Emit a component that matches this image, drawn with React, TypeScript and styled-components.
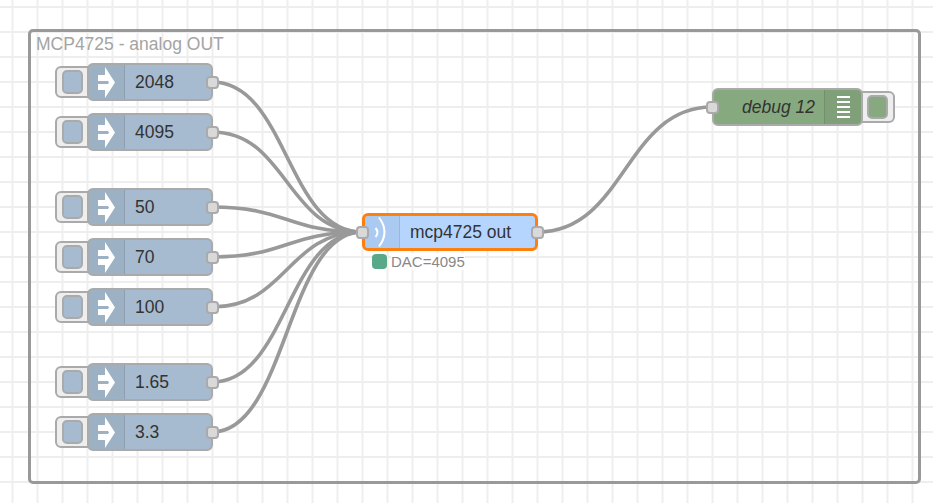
import React from "react";
import styled, { createGlobalStyle } from "styled-components";

const GlobalStyle = createGlobalStyle`
  html, body {
    margin: 0;
    padding: 0;
    background: #fff;
  }
  body {
    font-family: "Liberation Sans", Arial, sans-serif;
  }
`;

const Canvas = styled.div`
  position: relative;
  width: 933px;
  height: 503px;
  overflow: hidden;
  background-color: #fff;
  background-image:
    linear-gradient(to right, #eee 2px, transparent 2px),
    linear-gradient(to bottom, #eee 2px, transparent 2px);
  background-size: 25px 25px;
  background-position: 11.5px 6px;
`;

const GroupBox = styled.div`
  position: absolute;
  left: 28px;
  top: 29px;
  width: 893px;
  height: 455px;
  box-sizing: border-box;
  border: 3px solid #999;
  border-radius: 5px;
`;

const GroupLabel = styled.div`
  padding: 2px 0 0 5px;
  font-size: 17.5px;
  line-height: 20px;
  color: #a4a4a4;
`;

const Wires = styled.svg`
  position: absolute;
  left: 0;
  top: 0;
  width: 933px;
  height: 503px;
`;

const Wire = styled.path`
  fill: none;
  stroke: #999;
  stroke-width: 3.6px;
`;

const Placed = styled.div<{ $x: number; $y: number }>`
  position: absolute;
  left: ${(p) => p.$x}px;
  top: ${(p) => p.$y}px;
`;

const NodeBody = styled.div<{ $color: string; $width: number; $selected?: boolean }>`
  position: relative;
  display: flex;
  align-items: stretch;
  box-sizing: border-box;
  width: ${(p) => p.$width}px;
  height: 38px;
  background: ${(p) => p.$color};
  border: ${(p) => (p.$selected ? "3px solid #ff7f0e" : "2px solid #aaa")};
  border-radius: 6px;
`;

const IconCell = styled.div<{ $width: number; $side?: "left" | "right" }>`
  flex: none;
  display: flex;
  align-items: center;
  justify-content: center;
  width: ${(p) => p.$width}px;
  background: rgba(0, 0, 0, 0.05);
  border-${(p) => (p.$side === "right" ? "left" : "right")}: 1.5px solid rgba(0, 0, 0, 0.1);
  border-radius: ${(p) => (p.$side === "right" ? "0 4px 4px 0" : "4px 0 0 4px")};
  box-sizing: border-box;
`;

const NodeLabel = styled.div<{ $italic?: boolean; $right?: boolean; $pad: number }>`
  flex: 1;
  display: flex;
  align-items: center;
  justify-content: ${(p) => (p.$right ? "flex-end" : "flex-start")};
  padding-${(p) => (p.$right ? "right" : "left")}: ${(p) => p.$pad}px;
  font-size: 17.5px;
  font-style: ${(p) => (p.$italic ? "italic" : "normal")};
  color: #333;
  white-space: nowrap;
`;

const Port = styled.div<{ $side: "left" | "right"; $offset: number }>`
  position: absolute;
  top: 50%;
  ${(p) => p.$side}: ${(p) => p.$offset}px;
  width: 13px;
  height: 13px;
  margin-top: -6.5px;
  box-sizing: border-box;
  background: #d9d9d9;
  border: 2px solid #aaa;
  border-radius: 4px;
`;

const NodeButton = styled.div<{ $side: "left" | "right"; $color: string }>`
  position: absolute;
  top: 3px;
  ${(p) => p.$side}: -32px;
  display: flex;
  align-items: center;
  justify-content: ${(p) => (p.$side === "left" ? "flex-start" : "flex-end")};
  box-sizing: border-box;
  width: 40px;
  height: 32px;
  padding: 0 5px;
  background: #eee;
  border: 2px solid #aaa;
  border-radius: 6px;

  &::after {
    content: "";
    display: block;
    box-sizing: border-box;
    width: 21px;
    height: 24px;
    background: ${(p) => p.$color};
    border: 2px solid #aaa;
    border-radius: 5px;
  }
`;

const Glyph = styled.svg`
  display: block;
  flex: none;
  fill: #fff;
`;

const LineGlyph = styled.svg`
  display: block;
  flex: none;
  fill: none;
  stroke: #fff;
  stroke-width: 2px;
`;

const InjectIcon = () => (
  <Glyph width="17" height="31" viewBox="0 0 17 31">
    <path d="M0 8h7V0l10 15.500L7 31v-8H0v-6h10l1-1.500-1-1.500H0z" />
  </Glyph>
);

const WaveIcon = () => (
  <LineGlyph width="36" height="36" viewBox="364 214 36 36">
    <path d="M379 217.500Q390 232 379 246.500" />
    <path d="M375.500 228Q379.500 232.500 375.500 237" />
  </LineGlyph>
);

const ListIcon = () => (
  <LineGlyph width="13" height="24" viewBox="0 0 13 24">
    <path d="M0 2h13M0 7h13M0 12h13M0 17h13M0 22h13" />
  </LineGlyph>
);

const StatusRow = styled.div`
  display: flex;
  align-items: center;
  gap: 4px;
  margin: 3px 0 0 10px;
  height: 15px;
`;

const StatusDot = styled.div`
  width: 15px;
  height: 15px;
  border-radius: 4px;
  background: #5aa88a;
`;

const StatusText = styled.span`
  font-size: 15px;
  color: #888;
  background: rgba(255, 255, 255, 0.85);
`;

const injects = [
  { label: "2048", y: 63 },
  { label: "4095", y: 113 },
  { label: "50", y: 188 },
  { label: "70", y: 238 },
  { label: "100", y: 288 },
  { label: "1.65", y: 363 },
  { label: "3.3", y: 413 },
];

const wirePath = (x1: number, y1: number, x2: number, y2: number, c: number) =>
  `M${x1} ${y1}C${x1 + c} ${y1} ${x2 - c} ${y2} ${x2} ${y2}`;

export default function App() {
  return (
    <>
      <GlobalStyle />
      <Canvas>
        <GroupBox>
          <GroupLabel>MCP4725 - analog OUT</GroupLabel>
        </GroupBox>
        <Wires viewBox="0 0 933 503">
          {injects.map((n) => (
            <Wire key={n.label} d={wirePath(212, n.y + 19, 362, 232, 75)} />
          ))}
          <Wire d={wirePath(538, 232, 712, 107, 87)} />
        </Wires>
        {injects.map((n) => (
          <Placed key={n.label} $x={87} $y={n.y}>
            <NodeButton $side="left" $color="#a6bbcf" />
            <NodeBody $color="#a6bbcf" $width={126}>
              <IconCell $width={36}>
                <InjectIcon />
              </IconCell>
              <NodeLabel $pad={10}>{n.label}</NodeLabel>
              <Port $side="right" $offset={-8} />
            </NodeBody>
          </Placed>
        ))}
        <Placed $x={362} $y={213}>
          <NodeBody $color="#b5d5ff" $width={176} $selected>
            <IconCell $width={35}>
              <WaveIcon />
            </IconCell>
            <NodeLabel $pad={10}>mcp4725 out</NodeLabel>
            <Port $side="left" $offset={-9} />
            <Port $side="right" $offset={-9} />
          </NodeBody>
          <StatusRow>
            <StatusDot />
            <StatusText>DAC=4095</StatusText>
          </StatusRow>
        </Placed>
        <Placed $x={712} $y={88}>
          <NodeButton $side="right" $color="#87a980" />
          <NodeBody $color="#87a980" $width={151}>
            <NodeLabel $italic $right $pad={9}>
              debug 12
            </NodeLabel>
            <IconCell $width={37} $side="right">
              <ListIcon />
            </IconCell>
            <Port $side="left" $offset={-8} />
          </NodeBody>
        </Placed>
      </Canvas>
    </>
  );
}
